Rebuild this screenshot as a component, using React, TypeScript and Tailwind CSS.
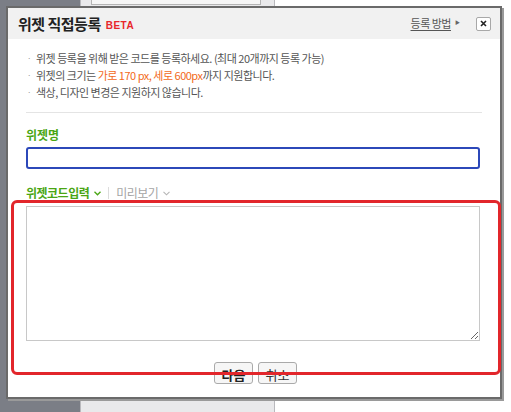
import React from 'react';

const KR = { fontFamily: '"Noto Sans CJK KR", "Noto Sans", sans-serif' };

function Bullet({ children }: { children: React.ReactNode }) {
  return (
    <li className="flex items-start gap-[5px] text-[11px] leading-[17px] tracking-[-0.5px] text-[#555]">
      <span className="mt-[4px] text-[8px] leading-none text-[#999]">·</span>
      <span>{children}</span>
    </li>
  );
}

export default function App() {
  return (
    <div className="relative h-[412px] w-[511px] overflow-hidden bg-white" style={KR}>
      {/* page behind the popup */}
      <div className="absolute inset-0 flex">
        <div className="w-[80px] bg-[#7b7e86]" />
        <div className="w-[195px] border-l border-r border-[#b9b9bd] bg-[#e9e9eb]">
          <div className="ml-[10px] mr-[13px] h-[5px] border-b border-l border-r border-[#b5b5b5] bg-[#f6f6f6]" />
        </div>
        <div className="flex-1 bg-white" />
      </div>

      {/* popup */}
      <div className="absolute left-[6px] top-[6px] flex h-[393px] w-[496px] flex-col border-2 border-[#6a6a6a] bg-white shadow-[2px_2px_0_#9a9a9a]">
        {/* header */}
        <div className="flex h-[31px] items-center bg-[#f1f1f1] pl-[10px] pr-[9px]">
          <h1 className="mt-[1px] text-[15px] font-bold tracking-[-0.5px] text-[#222]">위젯 직접등록</h1>
          <span className="ml-[5px] mt-[3px] text-[10px] font-bold tracking-[0.5px] text-[#e8262b]" style={{ fontFamily: '"Liberation Sans", sans-serif' }}>
            BETA
          </span>
          <a className="ml-auto text-[11px] tracking-[-0.5px] text-[#555] underline underline-offset-2">등록 방법</a>
          <span className="ml-[4px] mr-[16px] mb-[3px] text-[5px] text-[#666]">▶</span>
          <button className="flex h-[14px] w-[15px] items-center justify-center rounded-[2px] border border-[#a8a8a8] bg-white">
            <svg width="7" height="7" viewBox="0 0 7 7">
              <path d="M1 1L6 6M6 1L1 6" stroke="#222" strokeWidth="1.6" />
            </svg>
          </button>
        </div>

        {/* body */}
        <div className="flex flex-1 flex-col px-[18px] pt-[11px]">
          <ul className="ml-[1px] flex flex-col">
            <Bullet>위젯 등록을 위해 받은 코드를 등록하세요. (최대 20개까지 등록 가능)</Bullet>
            <Bullet>
              위젯의 크기는 <span className="text-[#f26a1b]">가로 170 px, 세로 600px</span>까지 지원합니다.
            </Bullet>
            <Bullet>색상, 디자인 변경은 지원하지 않습니다.</Bullet>
          </ul>
          <div className="mt-[11px] h-px bg-[#e4e4e4]" />

          <label className="mt-[13px] text-[12px] font-bold text-[#4aa614]">위젯명</label>
          <input className="mt-[3px] h-[22px] w-[454px] rounded-[3px] border-2 border-[#2c48b9] outline-none" />

          <div className="mt-[16px] flex h-[16px] items-center text-[12px] leading-[16px] tracking-[-0.5px]">
            <span className="font-bold text-[#4aa614]">위젯코드입력</span>
            <svg className="ml-[5px]" width="7" height="5" viewBox="0 0 7 5">
              <path d="M0.5 0.8L3.5 3.8L6.5 0.8" stroke="#4aa614" strokeWidth="1.3" fill="none" />
            </svg>
            <span className="mx-[7px] h-[12px] w-px bg-[#dcdcdc]" />
            <span className="text-[#a5a5a5]">미리보기</span>
            <svg className="ml-[5px]" width="7" height="5" viewBox="0 0 7 5">
              <path d="M0.5 0.8L3.5 3.8L6.5 0.8" stroke="#b5b5b5" strokeWidth="1.1" fill="none" />
            </svg>
          </div>
          <textarea className="mt-[5px] h-[135px] w-[454px] resize border border-[#c8c8c8] outline-none" />

          <div className="mt-[21px] flex justify-center gap-[5px] pl-[3px]">
            <button className="h-[22px] w-[39px] rounded-[3px] border border-[#aaa] bg-[#f6f6f6] pt-[2px] text-[13px] font-bold leading-none text-[#222]">
              다음
            </button>
            <button className="h-[22px] w-[39px] rounded-[3px] border border-[#aaa] bg-[#f6f6f6] pt-[2px] text-[13px] leading-none text-[#333]">
              취소
            </button>
          </div>
        </div>
      </div>

      {/* red annotation frame */}
      <div className="pointer-events-none absolute left-[11px] top-[200px] h-[175px] w-[490px] rounded-[6px] border-[3px] border-[#e2262b]" />
    </div>
  );
}
